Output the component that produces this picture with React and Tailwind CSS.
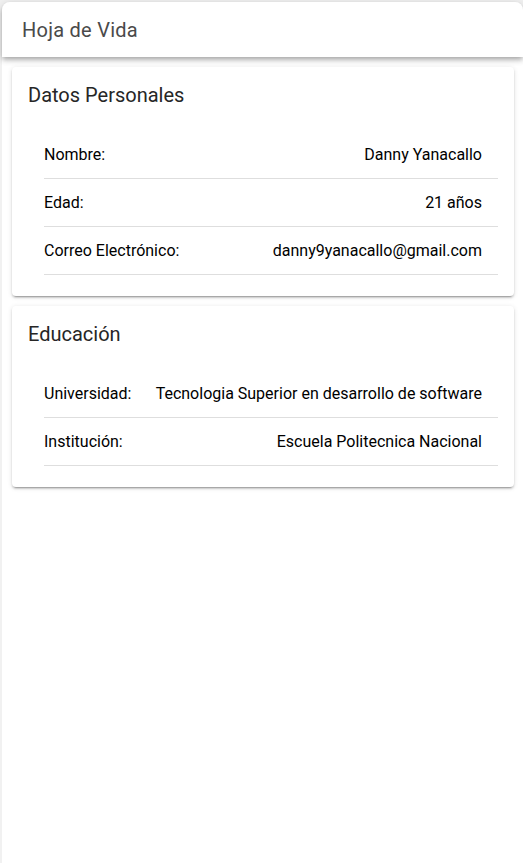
const personal = [
  { label: "Nombre:", value: "Danny Yanacallo" },
  { label: "Edad:", value: "21 años" },
  { label: "Correo Electrónico:", value: "danny9yanacallo@gmail.com" },
]

const educacion = [
  { label: "Universidad:", value: "Tecnologia Superior en desarrollo de software" },
  { label: "Institución:", value: "Escuela Politecnica Nacional" },
]

const Card = ({ title, items }) => {
  return (
    <div className="ml-[10px] mr-[9px] mt-[10px] rounded-[4px] bg-white shadow-[0_3px_1px_-2px_rgba(0,0,0,0.2),0_2px_2px_0_rgba(0,0,0,0.14),0_1px_5px_0_rgba(0,0,0,0.12)]">
      <div className="px-4 pt-4 pb-[24px]">
        <h2 className="text-[20px] leading-6 text-[#262626]">{title}</h2>
      </div>
      <ul className="px-4 pb-[21px]">
        {items.map((item) => (
          <li key={item.label} className="pl-4">
            <div className="flex h-[48px] items-center justify-between gap-4 border-b border-[#dedede] pr-4 text-[16px] text-black">
              <span className="whitespace-nowrap">{item.label}</span>
              <span className="whitespace-nowrap text-right">{item.value}</span>
            </div>
          </li>
        ))}
      </ul>
    </div>
  )
}

export default function App() {
  return (
    <div className="h-[863px] overflow-hidden bg-[#f1f1f1] pl-[2px] pt-[2px] font-['Roboto',sans-serif]">
      <div className="h-full rounded-t-[8px] bg-white">
        <header className="relative z-10 flex h-[55px] items-center rounded-t-[8px] bg-white px-5 shadow-[0_2px_4px_-1px_rgba(0,0,0,0.2),0_4px_5px_0_rgba(0,0,0,0.14),0_1px_10px_0_rgba(0,0,0,0.12)]">
          <h1 className="text-[20px] font-normal tracking-[0.0125em] text-[#4a4a4a]">Hoja de Vida</h1>
        </header>
        <main>
          <Card title="Datos Personales" items={personal} />
          <Card title="Educación" items={educacion} />
        </main>
      </div>
    </div>
  )
}
